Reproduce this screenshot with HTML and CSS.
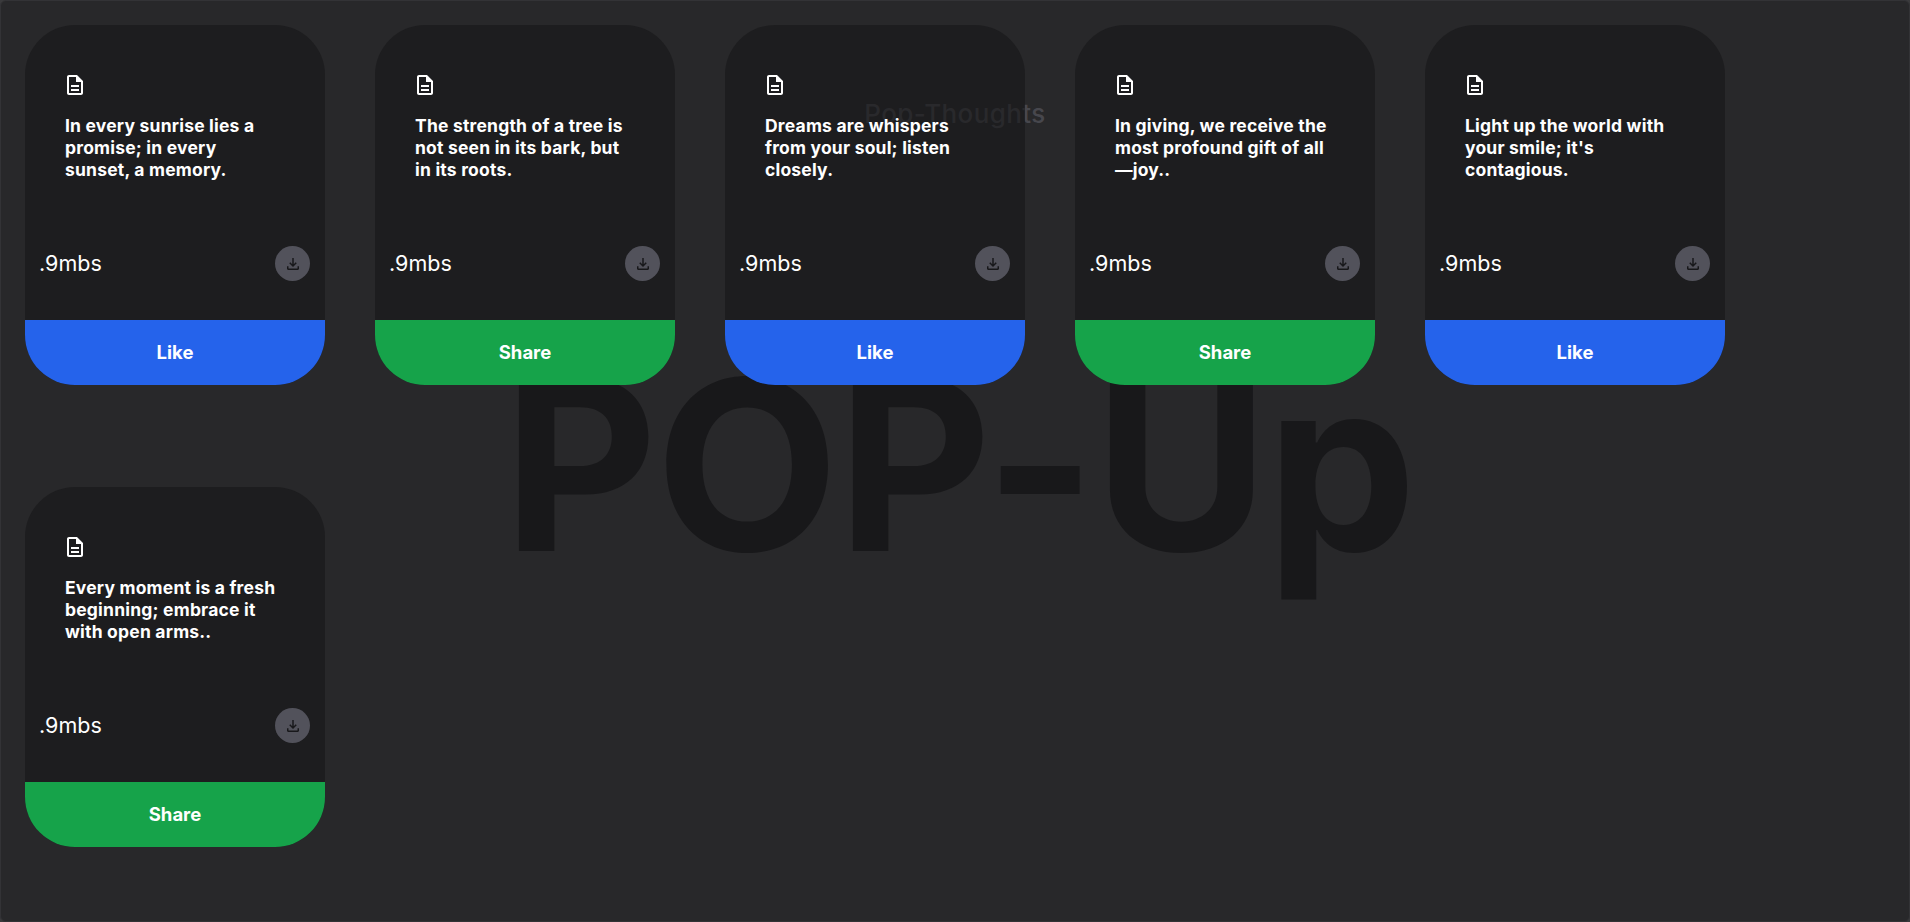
FILE: index.html
```html
<!DOCTYPE html>
<html lang="en">
<head>
<meta charset="utf-8">
<title>Pop-Thoughts</title>
<link rel="stylesheet" href="styles.css">
</head>
<body>
<main class="frame">
  <h2 class="subtitle">Pop-Thoughts</h2>
  <h1 class="backdrop">POP-Up</h1>
  <section class="cards">
    <article class="card">
      <div class="card-body">
        <svg class="doc" viewBox="0 0 24 24"><path d="M8 16h8v2H8zm0-4h8v2H8zm6-10H6c-1.1 0-2 .9-2 2v16c0 1.1.89 2 1.99 2H18c1.1 0 2-.9 2-2V8l-6-6zm4 18H6V4h7v5h5v11z"/></svg>
        <p class="quote">In every sunrise lies a<br>promise; in every<br>sunset, a memory.</p>
        <div class="meta"><span class="size">.9mbs</span><span class="dl"><svg viewBox="0 0 24 24"><path d="M18 15v3H6v-3H4v3c0 1.1.9 2 2 2h12c1.1 0 2-.9 2-2v-3h-2zm-1-4-1.41-1.41L13 12.17V4h-2v8.17L8.41 9.59 7 11l5 5 5-5z"/></svg></span></div>
      </div>
      <div class="action like">Like</div>
    </article>
    <article class="card">
      <div class="card-body">
        <svg class="doc" viewBox="0 0 24 24"><path d="M8 16h8v2H8zm0-4h8v2H8zm6-10H6c-1.1 0-2 .9-2 2v16c0 1.1.89 2 1.99 2H18c1.1 0 2-.9 2-2V8l-6-6zm4 18H6V4h7v5h5v11z"/></svg>
        <p class="quote">The strength of a tree is<br>not seen in its bark, but<br>in its roots.</p>
        <div class="meta"><span class="size">.9mbs</span><span class="dl"><svg viewBox="0 0 24 24"><path d="M18 15v3H6v-3H4v3c0 1.1.9 2 2 2h12c1.1 0 2-.9 2-2v-3h-2zm-1-4-1.41-1.41L13 12.17V4h-2v8.17L8.41 9.59 7 11l5 5 5-5z"/></svg></span></div>
      </div>
      <div class="action share">Share</div>
    </article>
    <article class="card">
      <div class="card-body">
        <svg class="doc" viewBox="0 0 24 24"><path d="M8 16h8v2H8zm0-4h8v2H8zm6-10H6c-1.1 0-2 .9-2 2v16c0 1.1.89 2 1.99 2H18c1.1 0 2-.9 2-2V8l-6-6zm4 18H6V4h7v5h5v11z"/></svg>
        <p class="quote">Dreams are whispers<br>from your soul; listen<br>closely.</p>
        <div class="meta"><span class="size">.9mbs</span><span class="dl"><svg viewBox="0 0 24 24"><path d="M18 15v3H6v-3H4v3c0 1.1.9 2 2 2h12c1.1 0 2-.9 2-2v-3h-2zm-1-4-1.41-1.41L13 12.17V4h-2v8.17L8.41 9.59 7 11l5 5 5-5z"/></svg></span></div>
      </div>
      <div class="action like">Like</div>
    </article>
    <article class="card">
      <div class="card-body">
        <svg class="doc" viewBox="0 0 24 24"><path d="M8 16h8v2H8zm0-4h8v2H8zm6-10H6c-1.1 0-2 .9-2 2v16c0 1.1.89 2 1.99 2H18c1.1 0 2-.9 2-2V8l-6-6zm4 18H6V4h7v5h5v11z"/></svg>
        <p class="quote">In giving, we receive the<br>most profound gift of all<br>—joy..</p>
        <div class="meta"><span class="size">.9mbs</span><span class="dl"><svg viewBox="0 0 24 24"><path d="M18 15v3H6v-3H4v3c0 1.1.9 2 2 2h12c1.1 0 2-.9 2-2v-3h-2zm-1-4-1.41-1.41L13 12.17V4h-2v8.17L8.41 9.59 7 11l5 5 5-5z"/></svg></span></div>
      </div>
      <div class="action share">Share</div>
    </article>
    <article class="card">
      <div class="card-body">
        <svg class="doc" viewBox="0 0 24 24"><path d="M8 16h8v2H8zm0-4h8v2H8zm6-10H6c-1.1 0-2 .9-2 2v16c0 1.1.89 2 1.99 2H18c1.1 0 2-.9 2-2V8l-6-6zm4 18H6V4h7v5h5v11z"/></svg>
        <p class="quote">Light up the world with<br>your smile; it's<br>contagious.</p>
        <div class="meta"><span class="size">.9mbs</span><span class="dl"><svg viewBox="0 0 24 24"><path d="M18 15v3H6v-3H4v3c0 1.1.9 2 2 2h12c1.1 0 2-.9 2-2v-3h-2zm-1-4-1.41-1.41L13 12.17V4h-2v8.17L8.41 9.59 7 11l5 5 5-5z"/></svg></span></div>
      </div>
      <div class="action like">Like</div>
    </article>
    <article class="card">
      <div class="card-body">
        <svg class="doc" viewBox="0 0 24 24"><path d="M8 16h8v2H8zm0-4h8v2H8zm6-10H6c-1.1 0-2 .9-2 2v16c0 1.1.89 2 1.99 2H18c1.1 0 2-.9 2-2V8l-6-6zm4 18H6V4h7v5h5v11z"/></svg>
        <p class="quote">Every moment is a fresh<br>beginning; embrace it<br>with open arms..</p>
        <div class="meta"><span class="size">.9mbs</span><span class="dl"><svg viewBox="0 0 24 24"><path d="M18 15v3H6v-3H4v3c0 1.1.9 2 2 2h12c1.1 0 2-.9 2-2v-3h-2zm-1-4-1.41-1.41L13 12.17V4h-2v8.17L8.41 9.59 7 11l5 5 5-5z"/></svg></span></div>
      </div>
      <div class="action share">Share</div>
    </article>
  </section>
</main>
</body>
</html>
```
FILE: styles.css
```css
* { box-sizing: border-box; }
html, body { margin: 0; height: 100%; background: #3a3a3c; }
body { font-family: Inter, "Noto Sans", sans-serif; color: #fff; overflow: hidden; }
.frame {
  position: relative;
  height: 922px;
  padding: 24px;
  background: #28282a;
  border: 1px solid #333336;
  border-radius: 6px;
  overflow: hidden;
}
.subtitle {
  position: absolute;
  top: 97px;
  left: 0;
  right: 0;
  margin: 0;
  text-align: center;
  font-size: 26px;
  line-height: 32px;
  letter-spacing: 0.4px;
  font-weight: 500;
  color: #47474d;
}
.backdrop {
  position: absolute;
  top: 318px;
  left: 0;
  right: -8px;
  margin: 0;
  text-align: center;
  font-size: 238px;
  line-height: 290px;
  letter-spacing: -1.8px;
  font-weight: 700;
  color: #18181a;
  white-space: nowrap;
}
.cards {
  position: relative;
  display: flex;
  flex-wrap: wrap;
  column-gap: 50px;
  row-gap: 102px;
}
.card {
  width: 300px;
  height: 360px;
  display: flex;
  flex-direction: column;
  border-radius: 50px;
  overflow: hidden;
  background: rgba(22, 22, 24, 0.62);
}
.card-body {
  flex: 1;
  display: flex;
  flex-direction: column;
  padding: 48px 15px 39px 14px;
}
.doc {
  width: 24px;
  height: 24px;
  margin-left: 24px;
  fill: #fff;
  flex: none;
}
.quote {
  margin: 18px 0 0 26px;
  width: 225px;
  font-size: 17.5px;
  line-height: 22px;
  letter-spacing: 0.2px;
  font-weight: 700;
}
.meta {
  margin-top: auto;
  display: flex;
  align-items: center;
  justify-content: space-between;
}
.size { font-size: 21.5px; line-height: 28px; padding-bottom: 2px; }
.dl {
  width: 35px;
  height: 35px;
  border-radius: 50%;
  background: #52525b;
  display: flex;
  align-items: center;
  justify-content: center;
}
.dl svg { width: 18px; height: 18px; fill: #18181b; }
.action {
  height: 65px;
  flex: none;
  display: flex;
  align-items: center;
  justify-content: center;
  padding-bottom: 2px;
  font-size: 18.5px;
  font-weight: 700;
}
.like { background: #2563eb; }
.share { background: #16a34a; }
```
